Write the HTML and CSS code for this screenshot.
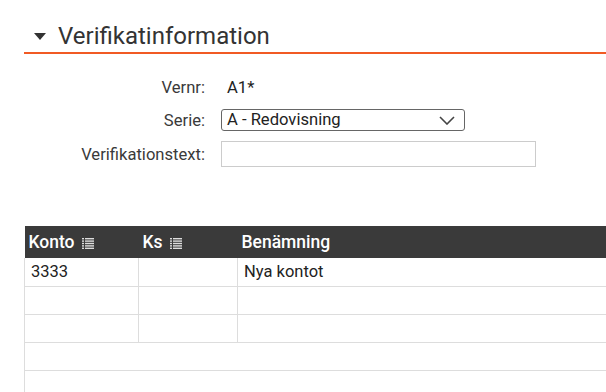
FILE: index.html
```html
<!DOCTYPE html>
<html>
<head>
<meta name="viewport" content="width=device-width, initial-scale=1.0">
<link rel="stylesheet" href="styles.css">
</head>
<body>

<div class="panel">
  <!-- RUBRIK -->
  <div class="panel-head">
    <svg class="caret" width="12" height="7" viewBox="0 0 12 7"><polygon points="0,0 12,0 6,7" fill="#333"/></svg>
    <span class="panel-title">Verifikatinformation</span>
  </div>

  <!-- FORMULAR -->
  <div class="form">
    <label class="form-label">Vernr:</label>
    <div class="form-value">A1*</div>

    <label class="form-label" for="serie">Serie:</label>
    <div class="select-box" id="serie">
      <span>A - Redovisning</span>
      <svg width="16" height="9" viewBox="0 0 16 9"><polyline points="1,1 8,8 15,1" fill="none" stroke="#444" stroke-width="1.6"/></svg>
    </div>

    <label class="form-label" for="vtext">Verifikationstext:</label>
    <input class="text-input" id="vtext" type="text">
  </div>

  <!-- TABELL -->
  <table class="grid">
    <thead>
      <tr>
        <th class="col-konto">Konto <svg class="list-icon" width="12" height="11" viewBox="0 0 12 11"><g fill="#ddd"><rect x="0" y="0" width="2" height="1.4"/><rect x="3" y="0" width="9" height="1.4"/><rect x="0" y="2.4" width="2" height="1.4"/><rect x="3" y="2.4" width="9" height="1.4"/><rect x="0" y="4.8" width="2" height="1.4"/><rect x="3" y="4.8" width="9" height="1.4"/><rect x="0" y="7.2" width="2" height="1.4"/><rect x="3" y="7.2" width="9" height="1.4"/><rect x="0" y="9.6" width="2" height="1.4"/><rect x="3" y="9.6" width="9" height="1.4"/></g></svg></th>
        <th class="col-ks">Ks <svg class="list-icon" width="12" height="11" viewBox="0 0 12 11"><g fill="#ddd"><rect x="0" y="0" width="2" height="1.4"/><rect x="3" y="0" width="9" height="1.4"/><rect x="0" y="2.4" width="2" height="1.4"/><rect x="3" y="2.4" width="9" height="1.4"/><rect x="0" y="4.8" width="2" height="1.4"/><rect x="3" y="4.8" width="9" height="1.4"/><rect x="0" y="7.2" width="2" height="1.4"/><rect x="3" y="7.2" width="9" height="1.4"/><rect x="0" y="9.6" width="2" height="1.4"/><rect x="3" y="9.6" width="9" height="1.4"/></g></svg></th>
        <th>Benämning</th>
      </tr>
    </thead>
    <tbody>
      <tr><td>3333</td><td></td><td>Nya kontot</td></tr>
      <tr><td></td><td></td><td></td></tr>
      <tr><td></td><td></td><td></td></tr>
      <tr><td colspan="3"></td></tr>
      <tr><td colspan="3"></td></tr>
    </tbody>
  </table>
</div>

</body>
</html>
```

FILE: styles.css
```css
* {
  box-sizing: border-box;
}

body {
  margin: 0;
  font-family: Roboto, "Liberation Sans", Arial, sans-serif;
  color: #333;
  background: #fff;
  overflow: hidden;
}

.panel {
  padding-left: 24px;
}

/* Rubrik */
.panel-head {
  display: flex;
  align-items: center;
  height: 54px;
  padding-top: 20px;
  padding-left: 10px;
  border-bottom: 2px solid #f15a24;
}

.caret {
  margin-right: 12px;
  margin-top: 1px;
}

.panel-title {
  font-size: 24px;
  color: #333;
}

/* Formular */
.form {
  display: grid;
  grid-template-columns: 181px 315px;
  grid-template-rows: 24px 22px 26px;
  column-gap: 16px;
  row-gap: 10px;
  align-items: center;
  margin-top: 21px;
  font-size: 16.6px;
}

.form-label {
  text-align: right;
  color: #3a3a3a;
}

.form-value {
  padding-left: 6px;
  color: #222;
}

.select-box {
  width: 244px;
  height: 22px;
  border: 1px solid #666;
  border-radius: 3px;
  display: flex;
  align-items: center;
  justify-content: space-between;
  padding: 0 9px 0 5px;
  color: #222;
}

.select-box span {
  line-height: 20px;
}

.text-input {
  width: 315px;
  height: 26px;
  border: 1px solid #ccc;
  margin: 0;
}

/* Tabell */
.grid {
  margin-top: 59px;
  width: 100%;
  border-collapse: collapse;
  font-size: 16.5px;
}

.grid th {
  background: #3a3a3a;
  color: #fff;
  font-weight: 500;
  font-size: 17.5px;
  text-align: left;
  height: 32px;
  padding: 0 4px;
}

.grid .col-konto {
  width: 114px;
}

.grid .col-ks {
  width: 99px;
}

.list-icon {
  margin-left: 3px;
  vertical-align: -1px;
}

.grid td {
  height: 28px;
  padding: 0 6px;
  border: 1px solid #ddd;
  border-top: none;
  border-right: none;
  color: #222;
}

.grid td + td {
  border-left: 1px solid #ddd;
}
```
